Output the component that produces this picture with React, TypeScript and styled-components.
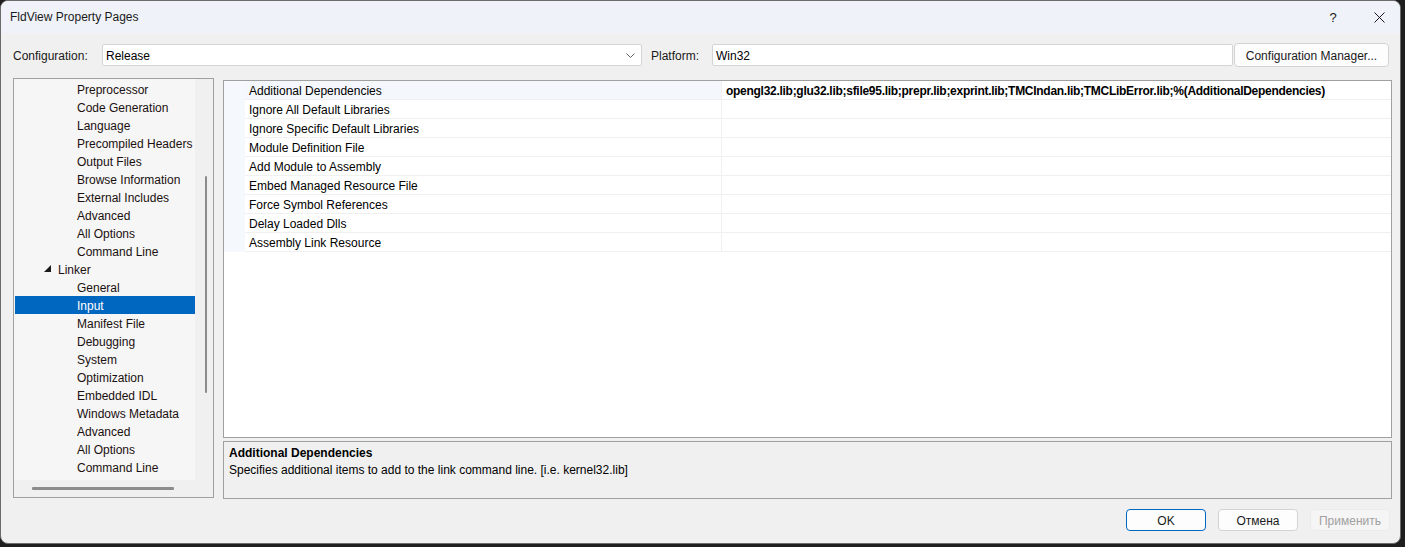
import styled, { createGlobalStyle } from 'styled-components';

/* ---------- globals ---------- */
const GlobalStyle = createGlobalStyle`
  html, body { margin: 0; padding: 0; background: #1e1e1e; }
  body { font-family: "Liberation Sans", Arial, sans-serif; font-size: 12px; color: #000; }
  * { box-sizing: border-box; }
`;

/* ---------- window frame ---------- */
const Window = styled.div`
  width: 1401px;
  height: 544px;
  background: #f0f0f0;
  border: 1px solid #6b6b6b;
  border-radius: 8px;
  overflow: hidden;
  display: flex;
  flex-direction: column;
`;

const TitleBar = styled.div`
  height: 32px;
  flex: none;
  display: flex;
  align-items: center;
  background: #eff3f9;
  padding-left: 9px;
`;

const TitleText = styled.div`
  flex: 1;
  font-size: 12px;
  color: #1a1a1a;
`;

const CaptionButton = styled.div`
  width: 46px;
  height: 32px;
  display: flex;
  align-items: center;
  justify-content: center;
  padding-left: 4px;
  color: #1a1a1a;
  font-size: 13px;
`;

const Body = styled.div`
  flex: 1;
  display: flex;
  flex-direction: column;
  padding: 10px 10px 0 12px;
`;

/* ---------- configuration row ---------- */
const ConfigRow = styled.div`
  display: flex;
  align-items: center;
  height: 24px;
`;

const FieldLabel = styled.div<{ $w: number }>`
  width: ${p => p.$w}px;
  flex: none;
  color: #1a1a1a;
  padding-top: 1px;
`;

const ComboBox = styled.div<{ $w: number }>`
  width: ${p => p.$w}px;
  height: 22px;
  flex: none;
  background: #fff;
  border: 1px solid #d4d4d4;
  border-radius: 2px;
  display: flex;
  align-items: center;
  padding: 1px 6px 0 3px;
  color: #000;
`;

const ComboText = styled.span`
  flex: 1;
`;

const PushButton = styled.button<{ $variant?: 'default' | 'primary' | 'disabled'; $w: number }>`
  width: ${p => p.$w}px;
  height: ${p => (p.$w > 100 ? 24 : 22)}px;
  flex: none;
  font: inherit;
  font-size: 12px;
  border-radius: 4px;
  padding: 1px 0 0;
  background: ${p => (p.$variant === 'disabled' ? '#f5f5f5' : '#fdfdfd')};
  color: ${p => (p.$variant === 'disabled' ? '#a0a0a0' : '#1a1a1a')};
  border: 1px solid
    ${p => (p.$variant === 'primary' ? '#0067c0' : p.$variant === 'disabled' ? '#ebebeb' : '#d3d3d3')};
`;

/* ---------- main area ---------- */
const MainArea = styled.div`
  display: flex;
  align-items: flex-start;
  gap: 9px;
  margin-top: 11px;
  height: 421px;
`;

const TreePanel = styled.div`
  width: 201px;
  height: 420px;
  flex: none;
  border: 1px solid #a0a0a0;
  display: grid;
  grid-template-columns: 181px 18px;
  grid-template-rows: 401px 17px;
`;

const TreeList = styled.div`
  background: #f6f6f6;
  padding: 1px 0 0 1px;
  overflow: hidden;
`;

const TreeItem = styled.div<{ $level: number; $selected?: boolean }>`
  height: 18px;
  line-height: 16px;
  padding-top: 2px;
  display: flex;
  align-items: center;
  padding-left: ${p => (p.$level === 1 ? 29 : 62)}px;
  background: ${p => (p.$selected ? '#0067c0' : 'transparent')};
  color: ${p => (p.$selected ? '#fff' : '#1a1010')};
  white-space: nowrap;
`;

const Expander = styled.svg`
  width: 7px;
  height: 7px;
  margin-right: 7px;
  margin-top: -3px;
`;

const VScroll = styled.div`
  background: #f0f0f0;
  display: flex;
  justify-content: center;
  padding-left: 3px;
`;

const VThumb = styled.div`
  width: 2px;
  height: 217px;
  margin-top: 97px;
  background: #8c8c8c;
  border-radius: 1px;
`;

const HScroll = styled.div`
  background: #f0f0f0;
  padding: 7px 0 0 18px;
`;

const HThumb = styled.div`
  width: 142px;
  height: 3px;
  background: #8c8c8c;
  border-radius: 1px;
`;

const Corner = styled.div`
  background: #f0f0f0;
`;

const RightColumn = styled.div`
  flex: 1;
  display: flex;
  flex-direction: column;
  gap: 3px;
  padding-top: 2px;
  margin-right: -2px;
`;

const PropertyGrid = styled.div`
  height: 358px;
  background: #fff;
  border: 1px solid #a0a0a0;
`;

const GridRow = styled.div`
  display: grid;
  grid-template-columns: 21px 477px 1fr;
  height: 19px;
`;

const Gutter = styled.div`
  background: #f5f8fc;
`;

const Cell = styled.div<{ $name?: boolean; $active?: boolean }>`
  border-bottom: 1px solid #f0f0f0;
  border-right: ${p => (p.$name ? '1px solid #f0f0f0' : 'none')};
  background: ${p => (p.$active && p.$name ? '#f4f7fc' : '#fff')};
  padding: 1px 0 0 4px;
  line-height: 18px;
  font-weight: ${p => (p.$name ? 400 : 700)};
  letter-spacing: ${p => (p.$name ? 0 : '-0.28px')};
  color: #000;
  white-space: nowrap;
  overflow: hidden;
`;

const DescPanel = styled.div`
  height: 58px;
  border: 1px solid #a0a0a0;
  background: #f0f0f0;
  padding: 3px 5px;
  line-height: 17px;
`;

const DescTitle = styled.div`
  font-weight: 700;
`;

const Footer = styled.div`
  display: flex;
  justify-content: flex-end;
  gap: 12px;
  margin-top: 10px;
`;

/* ---------- data ---------- */
const treeItems: { label: string; level: number; selected?: boolean }[] = [
  { label: 'Preprocessor', level: 2 },
  { label: 'Code Generation', level: 2 },
  { label: 'Language', level: 2 },
  { label: 'Precompiled Headers', level: 2 },
  { label: 'Output Files', level: 2 },
  { label: 'Browse Information', level: 2 },
  { label: 'External Includes', level: 2 },
  { label: 'Advanced', level: 2 },
  { label: 'All Options', level: 2 },
  { label: 'Command Line', level: 2 },
  { label: 'Linker', level: 1 },
  { label: 'General', level: 2 },
  { label: 'Input', level: 2, selected: true },
  { label: 'Manifest File', level: 2 },
  { label: 'Debugging', level: 2 },
  { label: 'System', level: 2 },
  { label: 'Optimization', level: 2 },
  { label: 'Embedded IDL', level: 2 },
  { label: 'Windows Metadata', level: 2 },
  { label: 'Advanced', level: 2 },
  { label: 'All Options', level: 2 },
  { label: 'Command Line', level: 2 },
];

const properties: [string, string][] = [
  ['Additional Dependencies', 'opengl32.lib;glu32.lib;sfile95.lib;prepr.lib;exprint.lib;TMCIndan.lib;TMCLibError.lib;%(AdditionalDependencies)'],
  ['Ignore All Default Libraries', ''],
  ['Ignore Specific Default Libraries', ''],
  ['Module Definition File', ''],
  ['Add Module to Assembly', ''],
  ['Embed Managed Resource File', ''],
  ['Force Symbol References', ''],
  ['Delay Loaded Dlls', ''],
  ['Assembly Link Resource', ''],
];

export default function App() {
  return (
    <>
      <GlobalStyle />
      <Window>
        <TitleBar>
          <TitleText>FldView Property Pages</TitleText>
          <CaptionButton>?</CaptionButton>
          <CaptionButton>
            <svg width="11" height="11" viewBox="0 0 11 11">
              <path d="M0.5 0.5 L10.5 10.5 M10.5 0.5 L0.5 10.5" stroke="#1a1a1a" strokeWidth="1" />
            </svg>
          </CaptionButton>
        </TitleBar>

        <Body>
          {/* configuration / platform */}
          <ConfigRow>
            <FieldLabel $w={89}>Configuration:</FieldLabel>
            <ComboBox $w={540}>
              <ComboText>Release</ComboText>
              <svg width="9" height="5" viewBox="0 0 9 5">
                <path d="M0.5 0.5 L4.5 4.5 L8.5 0.5" stroke="#606060" fill="none" strokeWidth="1" />
              </svg>
            </ComboBox>
            <FieldLabel $w={61} style={{ marginLeft: 9 }}>Platform:</FieldLabel>
            <ComboBox $w={521}>
              <ComboText>Win32</ComboText>
            </ComboBox>
            <PushButton $w={155} style={{ marginLeft: 1 }}>Configuration Manager...</PushButton>
          </ConfigRow>

          <MainArea>
            {/* tree */}
            <TreePanel>
              <TreeList>
                {treeItems.map((it, i) => (
                  <TreeItem key={i} $level={it.level} $selected={it.selected}>
                    {it.level === 1 && (
                      <Expander viewBox="0 0 7 7">
                        <polygon points="7,0 7,7 0,7" fill="#1a1a1a" />
                      </Expander>
                    )}
                    {it.label}
                  </TreeItem>
                ))}
              </TreeList>
              <VScroll>
                <VThumb />
              </VScroll>
              <HScroll>
                <HThumb />
              </HScroll>
              <Corner />
            </TreePanel>

            {/* property grid + description */}
            <RightColumn>
              <PropertyGrid>
                {properties.map(([name, value], i) => (
                  <GridRow key={name}>
                    <Gutter />
                    <Cell $name $active={i === 0}>{name}</Cell>
                    <Cell>{value}</Cell>
                  </GridRow>
                ))}
              </PropertyGrid>
              <DescPanel>
                <DescTitle>Additional Dependencies</DescTitle>
                <div>Specifies additional items to add to the link command line. [i.e. kernel32.lib]</div>
              </DescPanel>
            </RightColumn>
          </MainArea>

          <Footer>
            <PushButton $w={80} $variant="primary">OK</PushButton>
            <PushButton $w={80}>Отмена</PushButton>
            <PushButton $w={80} $variant="disabled">Применить</PushButton>
          </Footer>
        </Body>
      </Window>
    </>
  );
}
